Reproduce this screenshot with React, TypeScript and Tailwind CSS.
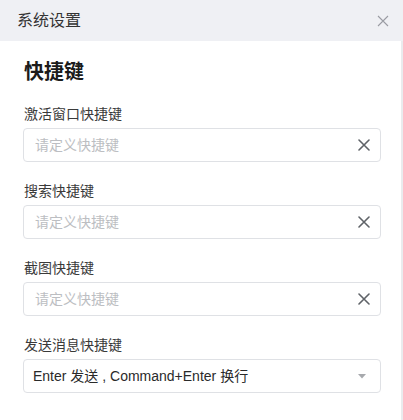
import React from 'react';

const fields = [
  { label: '激活窗口快捷键', placeholder: '请定义快捷键' },
  { label: '搜索快捷键', placeholder: '请定义快捷键' },
  { label: '截图快捷键', placeholder: '请定义快捷键' },
];

const ClearIcon: React.FC = () => (
  <svg width="12" height="12" viewBox="0 0 12 12" className="shrink-0">
    <path d="M1 1 L11 11 M11 1 L1 11" stroke="#5f6368" strokeWidth="1.6" strokeLinecap="round" />
  </svg>
);

const App: React.FC = () => {
  return (
    <div
      className="w-[403px] h-[420px] bg-white flex flex-col overflow-hidden"
      style={{ fontFamily: '"Liberation Sans", "Noto Sans CJK SC", sans-serif' }}
    >
      {/* header */}
      <div className="h-[41px] shrink-0 bg-[#eff0f4] flex items-center justify-between pl-[17px] pr-[14px]">
        <span className="text-[16px] text-[#333]">系统设置</span>
        <svg width="12" height="12" viewBox="0 0 12 12">
          <path d="M1 1 L11 11 M11 1 L1 11" stroke="#9a9ca3" strokeWidth="1.1" />
        </svg>
      </div>

      <div className="flex-1 border-r-2 border-[#eaebee] pl-[23px] pr-[20px] pt-[17px]">
        <h2 className="text-[20px] leading-7 font-bold text-[#1b1b1b] pl-px mb-[18px]">快捷键</h2>

        {fields.map((f) => (
          <div key={f.label} className="mb-[19px]">
            <div className="text-[14px] leading-5 text-[#3a3a3a] pl-px mb-1">{f.label}</div>
            <div className="h-[34px] border border-[#dfe1e5] rounded-[4px] flex items-center justify-between pl-[11px] pr-[10px]">
              <span className="text-[14px] text-[#bcbec2]">{f.placeholder}</span>
              <ClearIcon />
            </div>
          </div>
        ))}

        <div>
          <div className="text-[14px] leading-5 text-[#3a3a3a] pl-px mb-1">发送消息快捷键</div>
          <div className="h-[34px] border border-[#dfe1e5] rounded-[4px] flex items-center justify-between pl-[9px] pr-[14px]">
            <span className="text-[14px] text-[#2a2a2a]">Enter 发送 , Command+Enter 换行</span>
            <svg width="8" height="5" viewBox="0 0 8 5">
              <path d="M0 0 L8 0 L4 4.5 Z" fill="#a7a9ad" />
            </svg>
          </div>
        </div>
      </div>
    </div>
  );
};

export default App;
